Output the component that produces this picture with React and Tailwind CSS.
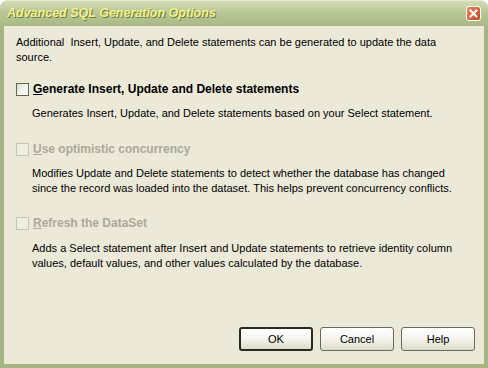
import React from 'react';

const font = { fontFamily: '"Liberation Sans", Arial, sans-serif' };

const Check = ({ disabled }) => (
  <span
    className={`inline-block w-[13px] h-[13px] border shrink-0 ${
      disabled ? 'border-[#c7c5b2] bg-[#f0eee2]' : 'border-[#5e6b4a] bg-gradient-to-br from-[#dcdcd2] via-[#f4f4f0] to-white'
    }`}
  />
);

const Option = ({ first, rest, disabled, className }) => (
  <div className={`flex items-center h-[15px] ${className}`}>
    <Check disabled={disabled} />
    <span className={`ml-[4px] font-bold text-[12px] ${disabled ? 'text-[#aca899]' : 'text-black'}`}>
      <span className="underline">{first}</span>
      {rest}
    </span>
  </div>
);

const Button = ({ children, primary }) => (
  <button
    className={`w-[74px] h-[24px] rounded-[3px] text-[11px] text-black bg-gradient-to-b from-white via-[#f5f4ee] to-[#dedbc8] ${
      primary ? 'border-2 border-[#2a2a22]' : 'border border-[#6b6b5c]'
    }`}
  >
    {children}
  </button>
);

export default function App() {
  return (
    <div className="w-[488px] h-[368px] flex flex-col bg-white" style={font}>
      <div className="h-[26px] shrink-0 flex items-center justify-between px-[7px] rounded-t-[7px] bg-gradient-to-b from-[#d2dcb4] via-[#b6c594] to-[#a9ba87] border-t border-[#e4ead0]">
        <span className="text-[12.5px] font-bold italic text-[#f2f28c] [text-shadow:1px_1px_0_#6c7a45]">
          Advanced SQL Generation Options
        </span>
        <span className="w-[15px] h-[15px] rounded-[3px] bg-gradient-to-br from-[#e88a60] to-[#c4401c] border border-white flex items-center justify-center">
          <svg width="9" height="9" viewBox="0 0 9 9">
            <path d="M1.5 1.5 L7.5 7.5 M7.5 1.5 L1.5 7.5" stroke="white" strokeWidth="2" strokeLinecap="square" />
          </svg>
        </span>
      </div>
      <div className="flex-1 flex flex-col bg-[#a5b57f] px-[4px] pb-[4px]">
        <div className="flex-1 flex flex-col bg-[#ece9d8] pl-[12px] pr-[9px] pt-[9px] pb-[13px] text-[11px] leading-[15px] text-black whitespace-nowrap">
          <p>
            Additional&nbsp; Insert, Update, and Delete statements can be generated to update the data
            <br />
            source.
          </p>
          <Option className="mt-[17px]" first="G" rest="enerate Insert, Update and Delete statements" />
          <p className="mt-[9px] pl-[16px]">Generates Insert, Update, and Delete statements based on your Select statement.</p>
          <Option className="mt-[21px]" disabled first="U" rest="se optimistic concurrency" />
          <p className="mt-[9px] pl-[16px]">
            Modifies Update and Delete statements to detect whether the database has changed
            <br />
            since the record was loaded into the dataset. This helps prevent concurrency conflicts.
          </p>
          <Option className="mt-[20px]" disabled first="R" rest="efresh the DataSet" />
          <p className="mt-[10px] pl-[16px]">
            Adds a Select statement after Insert and Update statements to retrieve identity column
            <br />
            values, default values, and other values calculated by the database.
          </p>
          <div className="mt-auto flex justify-end gap-[7px]">
            <Button primary>OK</Button>
            <Button>Cancel</Button>
            <Button>Help</Button>
          </div>
        </div>
      </div>
    </div>
  );
}
